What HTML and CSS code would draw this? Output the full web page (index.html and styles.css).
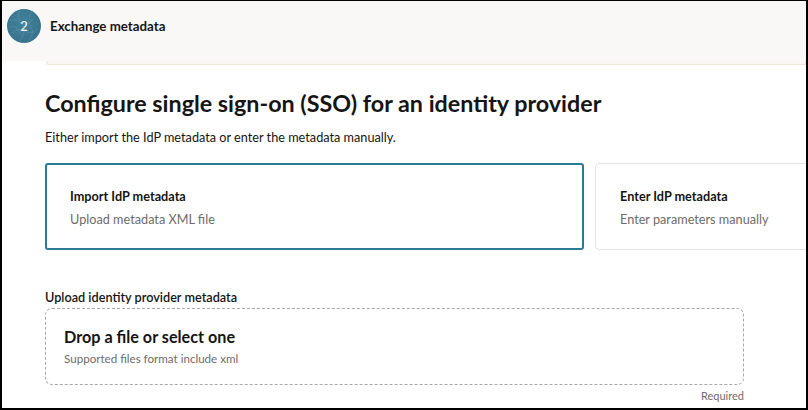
FILE: index.html
```html
<!DOCTYPE html>
<html lang="en">
<head>
<meta charset="utf-8">
<title>Exchange metadata</title>
<link rel="stylesheet" href="styles.css">
</head>
<body>
<div class="frame">
  <header class="step-header">
    <div class="step-badge">
      <svg class="badge-texture" width="34" height="34" viewBox="0 0 34 34" aria-hidden="true">
        <g fill="none" stroke="#6a9aae" stroke-width="0.7" opacity="0.55">
          <path d="M3 12 Q10 9 14 14 T26 10"/>
          <path d="M5 24 Q12 18 18 22 T31 20"/>
          <path d="M12 2 Q10 10 15 16 T13 32"/>
          <path d="M24 3 Q20 12 24 18 T22 31"/>
          <path d="M2 18 Q8 16 10 20 T16 28"/>
        </g>
      </svg>
      <span class="badge-num">2</span>
    </div>
    <span class="step-title">Exchange metadata</span>
  </header>
  <div class="panel-edge"></div>

  <main class="content">
    <h1 class="page-title">Configure single sign-on (SSO) for an identity provider</h1>
    <p class="page-sub">Either import the IdP metadata or enter the metadata manually.</p>

    <div class="choice-row">
      <div class="choice choice-selected">
        <div class="choice-title">Import IdP metadata</div>
        <div class="choice-desc">Upload metadata XML file</div>
      </div>
      <div class="choice">
        <div class="choice-title">Enter IdP metadata</div>
        <div class="choice-desc">Enter parameters manually</div>
      </div>
    </div>

    <div class="upload-field">
      <div class="field-label">Upload identity provider metadata</div>
      <div class="dropzone">
        <div class="drop-title">Drop a file or select one</div>
        <div class="drop-hint">Supported files format include xml</div>
      </div>
      <div class="field-help">Required</div>
    </div>
  </main>
</div>
</body>
</html>
```

FILE: styles.css
```css
* { box-sizing: border-box; }

html, body {
  margin: 0;
  padding: 0;
  background: #ffffff;
}

body {
  font-family: "Lato", "Noto Sans", sans-serif;
  color: #161513;
}

.frame {
  width: 808px;
  height: 410px;
  border: 2px solid #000;
  border-top-width: 1px;
  overflow: hidden;
  background: #fff;
}

.step-header {
  height: 60px;
  background: #f9f8f6;
  display: flex;
  align-items: flex-start;
  padding: 8px 0 0 5px;
  gap: 9px;
}

.step-badge {
  position: relative;
  width: 34px;
  height: 34px;
  border-radius: 50%;
  background: radial-gradient(circle at 45% 40%, #43819a 0%, #3a7790 60%, #356f87 100%);
  display: flex;
  align-items: center;
  justify-content: center;
  overflow: hidden;
  flex: none;
}

.badge-texture {
  position: absolute;
  left: 0;
  top: 0;
}

.badge-num {
  position: relative;
  color: #fff;
  font-size: 13px;
  line-height: 1;
}

.step-title {
  font-size: 13.3px;
  font-weight: 700;
  line-height: 18px;
  margin-top: 8px;
}

.panel-edge {
  margin-left: 44px;
  height: 4px;
  background: #faf7f2;
  border: 1px solid #efe6d8;
  border-top: none;
  border-radius: 0 0 0 3px;
}

.content {
  padding: 0 0 0 43px;
}

.page-title {
  margin: 23px 0 0;
  font-size: 23.3px;
  font-weight: 700;
  line-height: 30px;
  white-space: nowrap;
}

.page-sub {
  margin: 10px 0 0;
  font-size: 12.7px;
  line-height: 18px;
}

.choice-row {
  display: flex;
  gap: 11px;
  margin-top: 17px;
  width: 900px;
}

.choice {
  height: 87px;
  border: 1px solid #e4e2df;
  border-radius: 4px;
  padding: 24px 0 0 24px;
  width: 300px;
  flex: none;
}

.choice-selected {
  width: 539px;
  border: 2px solid #2b7b98;
  border-radius: 3px;
  padding: 23px 0 0 23px;
}

.choice-title {
  font-size: 12.7px;
  font-weight: 700;
  line-height: 16px;
}

.choice-desc {
  margin-top: 6px;
  font-size: 12.7px;
  color: #6f6c69;
  line-height: 18px;
}

.upload-field {
  width: 699px;
  margin-top: 39px;
}

.field-label {
  font-size: 12.7px;
  font-weight: 600;
  line-height: 16px;
}

.dropzone {
  margin-top: 3px;
  height: 77px;
  border: 1px dashed #a9a6a3;
  border-radius: 7px;
  padding: 18px 0 0 18px;
}

.drop-title {
  font-size: 16.2px;
  font-weight: 700;
  line-height: 20px;
}

.drop-hint {
  margin-top: 5px;
  font-size: 11.6px;
  color: #6f6c69;
  line-height: 14px;
}

.field-help {
  text-align: right;
  font-size: 11px;
  color: #6f6c69;
  line-height: 14px;
  margin-top: 4px;
}
```
